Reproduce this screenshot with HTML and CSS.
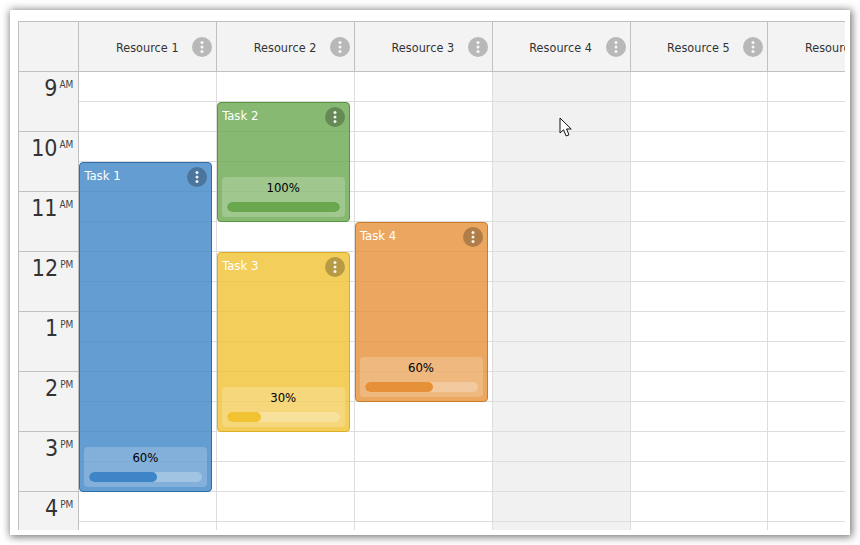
FILE: index.html
```html
<!DOCTYPE html>
<html lang="en">
<head>
<meta charset="utf-8">
<title>Scheduler</title>
<link rel="stylesheet" href="styles.css">
</head>
<body>
<main class="window">
  <div class="scheduler">
    <div class="header">
      <div class="corner"></div>
      <div class="res">Resource 1<span class="res-menu"><svg class="dots" viewBox="0 0 20 20"><circle cx="10" cy="5.5" r="1.5"/><circle cx="10" cy="10" r="1.5"/><circle cx="10" cy="14.5" r="1.5"/></svg></span></div>
      <div class="res">Resource 2<span class="res-menu"><svg class="dots" viewBox="0 0 20 20"><circle cx="10" cy="5.5" r="1.5"/><circle cx="10" cy="10" r="1.5"/><circle cx="10" cy="14.5" r="1.5"/></svg></span></div>
      <div class="res">Resource 3<span class="res-menu"><svg class="dots" viewBox="0 0 20 20"><circle cx="10" cy="5.5" r="1.5"/><circle cx="10" cy="10" r="1.5"/><circle cx="10" cy="14.5" r="1.5"/></svg></span></div>
      <div class="res">Resource 4<span class="res-menu"><svg class="dots" viewBox="0 0 20 20"><circle cx="10" cy="5.5" r="1.5"/><circle cx="10" cy="10" r="1.5"/><circle cx="10" cy="14.5" r="1.5"/></svg></span></div>
      <div class="res">Resource 5<span class="res-menu"><svg class="dots" viewBox="0 0 20 20"><circle cx="10" cy="5.5" r="1.5"/><circle cx="10" cy="10" r="1.5"/><circle cx="10" cy="14.5" r="1.5"/></svg></span></div>
      <div class="res">Resource 6<span class="res-menu"><svg class="dots" viewBox="0 0 20 20"><circle cx="10" cy="5.5" r="1.5"/><circle cx="10" cy="10" r="1.5"/><circle cx="10" cy="14.5" r="1.5"/></svg></span></div>
    </div>
    <div class="body">
      <div class="times">
        <div class="hour"><span class="num">9</span><span class="ampm">AM</span></div>
        <div class="hour"><span class="num">10</span><span class="ampm">AM</span></div>
        <div class="hour"><span class="num">11</span><span class="ampm">AM</span></div>
        <div class="hour"><span class="num">12</span><span class="ampm">PM</span></div>
        <div class="hour"><span class="num">1</span><span class="ampm">PM</span></div>
        <div class="hour"><span class="num">2</span><span class="ampm">PM</span></div>
        <div class="hour"><span class="num">3</span><span class="ampm">PM</span></div>
        <div class="hour"><span class="num">4</span><span class="ampm">PM</span></div>
      </div>

      <div class="col">
        <div class="cell"></div><div class="cell"></div><div class="cell"></div><div class="cell"></div><div class="cell"></div><div class="cell"></div><div class="cell"></div><div class="cell"></div>
        <div class="cell"></div><div class="cell"></div><div class="cell"></div><div class="cell"></div><div class="cell"></div><div class="cell"></div><div class="cell"></div><div class="cell"></div>
        <article class="event blue t1">
          <div class="title">Task 1</div>
          <span class="ev-menu"><svg class="dots" viewBox="0 0 20 20"><circle cx="10" cy="5.5" r="1.5"/><circle cx="10" cy="10" r="1.5"/><circle cx="10" cy="14.5" r="1.5"/></svg></span>
          <div class="progress"><div class="pct">60%</div><div class="track"><div class="fill w60"></div></div></div>
        </article>
      </div>

      <div class="col">
        <div class="cell"></div><div class="cell"></div><div class="cell"></div><div class="cell"></div><div class="cell"></div><div class="cell"></div><div class="cell"></div><div class="cell"></div>
        <div class="cell"></div><div class="cell"></div><div class="cell"></div><div class="cell"></div><div class="cell"></div><div class="cell"></div><div class="cell"></div><div class="cell"></div>
        <article class="event green t2">
          <div class="title">Task 2</div>
          <span class="ev-menu"><svg class="dots" viewBox="0 0 20 20"><circle cx="10" cy="5.5" r="1.5"/><circle cx="10" cy="10" r="1.5"/><circle cx="10" cy="14.5" r="1.5"/></svg></span>
          <div class="progress"><div class="pct">100%</div><div class="track"><div class="fill w100"></div></div></div>
        </article>
        <article class="event yellow t3">
          <div class="title">Task 3</div>
          <span class="ev-menu"><svg class="dots" viewBox="0 0 20 20"><circle cx="10" cy="5.5" r="1.5"/><circle cx="10" cy="10" r="1.5"/><circle cx="10" cy="14.5" r="1.5"/></svg></span>
          <div class="progress"><div class="pct">30%</div><div class="track"><div class="fill w30"></div></div></div>
        </article>
      </div>

      <div class="col">
        <div class="cell"></div><div class="cell"></div><div class="cell"></div><div class="cell"></div><div class="cell"></div><div class="cell"></div><div class="cell"></div><div class="cell"></div>
        <div class="cell"></div><div class="cell"></div><div class="cell"></div><div class="cell"></div><div class="cell"></div><div class="cell"></div><div class="cell"></div><div class="cell"></div>
        <article class="event orange t4">
          <div class="title">Task 4</div>
          <span class="ev-menu"><svg class="dots" viewBox="0 0 20 20"><circle cx="10" cy="5.5" r="1.5"/><circle cx="10" cy="10" r="1.5"/><circle cx="10" cy="14.5" r="1.5"/></svg></span>
          <div class="progress"><div class="pct">60%</div><div class="track"><div class="fill w60"></div></div></div>
        </article>
      </div>

      <div class="col off">
        <div class="cell"></div><div class="cell"></div><div class="cell"></div><div class="cell"></div><div class="cell"></div><div class="cell"></div><div class="cell"></div><div class="cell"></div>
        <div class="cell"></div><div class="cell"></div><div class="cell"></div><div class="cell"></div><div class="cell"></div><div class="cell"></div><div class="cell"></div><div class="cell"></div>
        <svg class="cursor" viewBox="0 0 14 21"><path d="M1 1 V16 L4.5 12.8 L7.2 19 L10 17.8 L7.5 12 H12.2 Z" fill="#fff" stroke="#111" stroke-width="1" stroke-linejoin="miter"/></svg>
      </div>

      <div class="col">
        <div class="cell"></div><div class="cell"></div><div class="cell"></div><div class="cell"></div><div class="cell"></div><div class="cell"></div><div class="cell"></div><div class="cell"></div>
        <div class="cell"></div><div class="cell"></div><div class="cell"></div><div class="cell"></div><div class="cell"></div><div class="cell"></div><div class="cell"></div><div class="cell"></div>
      </div>

      <div class="col">
        <div class="cell"></div><div class="cell"></div><div class="cell"></div><div class="cell"></div><div class="cell"></div><div class="cell"></div><div class="cell"></div><div class="cell"></div>
        <div class="cell"></div><div class="cell"></div><div class="cell"></div><div class="cell"></div><div class="cell"></div><div class="cell"></div><div class="cell"></div><div class="cell"></div>
      </div>
    </div>
  </div>
</main>
</body>
</html>
```

FILE: styles.css
```css
* { box-sizing: border-box; }

html, body {
  margin: 0;
  height: 100%;
  background: #fff;
  overflow: hidden;
}

body {
  padding: 10px;
  font-family: "DejaVu Sans Condensed", "DejaVu Sans", sans-serif;
  font-stretch: condensed;
  font-size: 13px;
  color: #333;
}

.window {
  width: 840px;
  height: 525px;
  padding: 11px 5px 5px 8px;
  background: #fff;
  box-shadow: 1px 1px 8px 1px rgba(0, 0, 0, .55);
}

.scheduler {
  width: 827px;
  height: 509px;
  overflow: hidden;
}

.header {
  display: flex;
  height: 51px;
  width: max-content;
  background: #f3f3f3;
  border-top: 1px solid #c0c0c0;
  border-bottom: 1px solid #c0c0c0;
}

.corner {
  flex: 0 0 61.4px;
  border-left: 1px solid #c0c0c0;
  border-right: 1px solid #c0c0c0;
}

.res {
  position: relative;
  flex: 0 0 137.8px;
  display: flex;
  align-items: center;
  justify-content: center;
  padding: 1px 1px 0 0;
  font-size: 12.5px;
  letter-spacing: .05px;
  border-right: 1px solid #c0c0c0;
  color: #333;
}

.res-menu {
  position: absolute;
  top: 15px;
  right: 4px;
  width: 20px;
  height: 20px;
  border-radius: 50%;
  background: #b8b8b8;
}

.dots {
  display: block;
  width: 20px;
  height: 20px;
  fill: #fff;
  opacity: .9;
}

.body {
  display: flex;
  width: max-content;
  background: #fff;
}

.times {
  flex: 0 0 61.4px;
  background: #f3f3f3;
  border-left: 1px solid #c0c0c0;
  border-right: 1px solid #c0c0c0;
}

.hour {
  display: flex;
  justify-content: flex-end;
  height: 60px;
  padding-right: 5px;
  border-bottom: 1px solid #c0c0c0;
}

.num {
  font-size: 23px;
  line-height: 33px;
  color: #333;
}

.ampm {
  margin-left: 2px;
  padding-top: 6px;
  font-size: 10px;
  line-height: 14px;
  color: #444;
}

.col {
  position: relative;
  flex: 0 0 137.8px;
  border-right: 1px solid #ddd;
}

.col.off { background: #f1f1f1; }

.cell {
  height: 30px;
  border-bottom: 1px solid #ddd;
}

.event {
  position: absolute;
  left: 0;
  width: 133px;
  display: flex;
  flex-direction: column;
  justify-content: space-between;
  padding: 0 4px 4px;
  border: 1px solid;
  border-radius: 4px;
  color: #fff;
}

.t1 { top: 90px; height: 330px; }
.t2 { top: 30px; height: 120px; }
.t3 { top: 180px; height: 180px; }
.t4 { top: 150px; height: 180px; }

.blue { background: rgba(61, 133, 198, .8); border-color: #2e6ea8; }
.green { background: rgba(106, 168, 79, .8); border-color: #5a9440; }
.yellow { background: rgba(241, 194, 50, .8); border-color: #dfae22; }
.orange { background: rgba(230, 145, 56, .8); border-color: #c97c2c; }

.title {
  padding-top: 4px;
  line-height: 17px;
}

.ev-menu {
  position: absolute;
  top: 4px;
  right: 4px;
  width: 20px;
  height: 20px;
  border-radius: 50%;
  background: rgba(0, 0, 0, .25);
}

.progress {
  height: 40px;
  padding: 3px 5px 5px;
  border-radius: 4px;
  background: rgba(255, 255, 255, .2);
}

.pct {
  height: 17px;
  margin-bottom: 5px;
  padding-right: 1px;
  line-height: 15px;
  text-align: center;
  color: #000;
}

.track {
  height: 10px;
  border-radius: 5px;
  background: rgba(255, 255, 255, .25);
  overflow: hidden;
}

.fill {
  height: 10px;
  border-radius: 5px;
}

.blue .fill { background: #3d85c6; }
.green .fill { background: #6aa84f; }
.yellow .fill { background: #f1c232; }
.orange .fill { background: #e69138; }

.w30 { width: 30%; }
.w60 { width: 60%; }
.w100 { width: 100%; }

.cursor {
  position: absolute;
  top: 45px;
  left: 66px;
  width: 14px;
  height: 21px;
}
```
